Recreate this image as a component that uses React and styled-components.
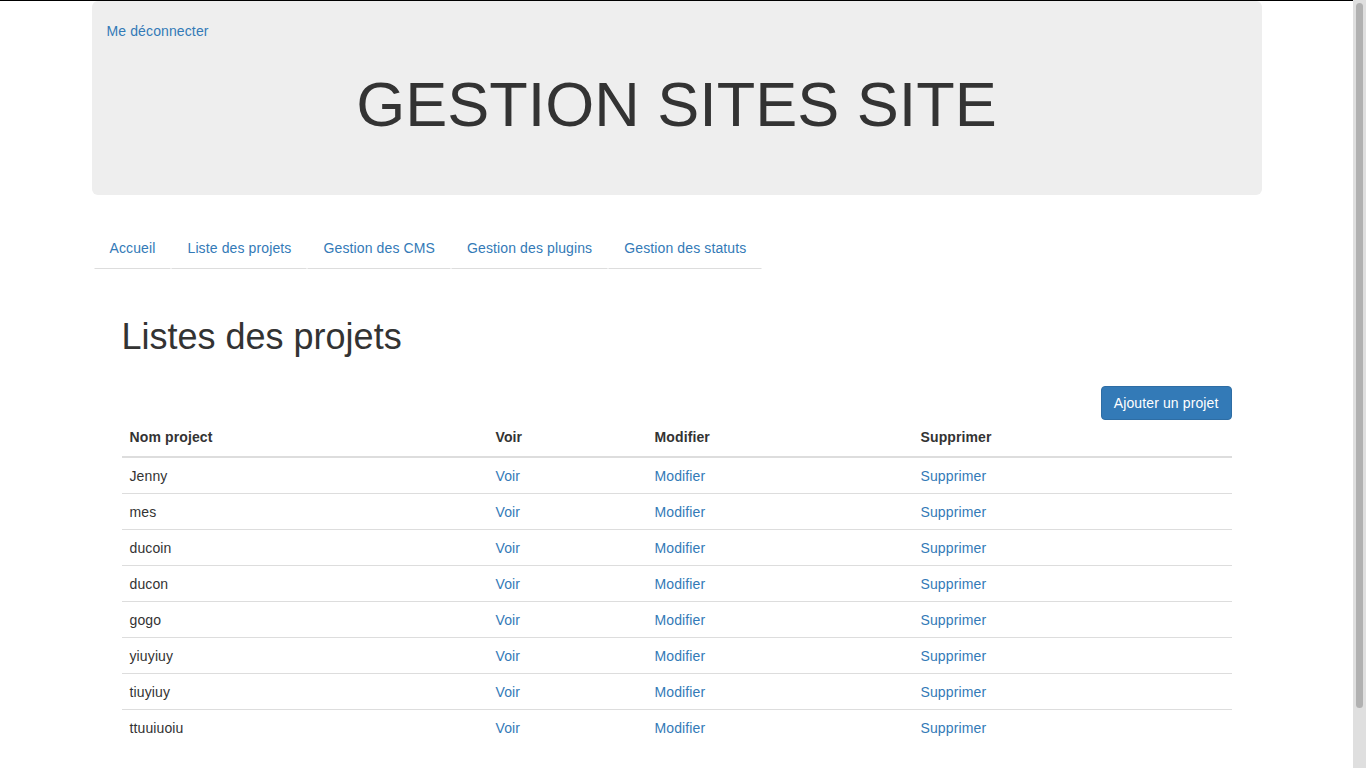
import React from "react";
import styled, { createGlobalStyle } from "styled-components";

const GlobalStyle = createGlobalStyle`
  body {
    margin: 0 13px 0 0;
    border-top: 1px solid #000;
    font-family: "Liberation Sans", Helvetica, Arial, sans-serif;
    font-size: 14px;
    line-height: 20px;
    letter-spacing: 0.12px;
    color: #333;
    background: #fff;
  }
  a {
    color: #337ab7;
    text-decoration: none;
  }
`;

// stands in for the browser's scrollbar, which the headless capture hides
const ScrollTrack = styled.div`
  position: fixed;
  top: 0;
  right: 0;
  width: 13px;
  height: 100vh;
  background: #dfdfdf;
`;

const ScrollThumb = styled.div`
  margin: 3px 3px 0;
  width: 7px;
  height: 705px;
  border-radius: 4px;
  background: #b1b1b1;
`;

const Container = styled.div`
  width: 1170px;
  margin: 0 auto;
  padding-bottom: 95px;
`;

const Jumbotron = styled.header`
  box-sizing: border-box;
  height: 194px;
  padding: 20px 15px 0;
  background: #eee;
  border-radius: 6px;
`;

const Title = styled.h1`
  margin: 29px 0 0;
  font-size: 63px;
  line-height: 1.1;
  font-weight: 500;
  letter-spacing: 0;
  text-align: center;
  color: #333;
`;

const Tabs = styled.ul`
  display: flex;
  list-style: none;
  margin: 32px 0 0 2px;
  padding: 0;
`;

const TabLink = styled.a`
  display: block;
  padding: 10px 15px;
  border: 1px solid transparent;
  border-bottom-color: #ddd;
  border-radius: 4px 4px 0 0;
`;

const Content = styled.main`
  padding: 0 30px;
`;

const Heading = styled.h1`
  margin: 48px 0 0;
  font-size: 36px;
  line-height: 1.1;
  font-weight: 500;
  letter-spacing: 0;
`;

const Toolbar = styled.div`
  display: flex;
  justify-content: flex-end;
  margin-top: 29px;
`;

const Button = styled.button`
  padding: 6px 12px;
  font-family: inherit;
  font-size: 14px;
  line-height: 20px;
  letter-spacing: inherit;
  color: #fff;
  background: #337ab7;
  border: 1px solid #2e6da4;
  border-radius: 4px;
  cursor: pointer;
`;

const Table = styled.table`
  width: 100%;
  table-layout: fixed;
  border-collapse: collapse;
  border-spacing: 0;
`;

const Th = styled.th`
  box-sizing: border-box;
  width: ${(p) => p.$w}px;
  padding: 7px 8px 9px;
  line-height: 20px;
  text-align: left;
  font-weight: bold;
  border-bottom: 2px solid #ddd;
`;

const Td = styled.td`
  padding: 9px 8px 7px;
  line-height: 19px;
  border-top: 1px solid #ddd;
`;

const tabs = [
  "Accueil",
  "Liste des projets",
  "Gestion des CMS",
  "Gestion des plugins",
  "Gestion des statuts",
];

const projects = [
  "Jenny",
  "mes",
  "ducoin",
  "ducon",
  "gogo",
  "yiuyiuy",
  "tiuyiuy",
  "ttuuiuoiu",
];

export default function App() {
  return (
    <>
      <GlobalStyle />
      <Container>
        <Jumbotron>
          <a href="#">Me déconnecter</a>
          <Title>GESTION SITES SITE</Title>
        </Jumbotron>

        <Tabs>
          {tabs.map((t) => (
            <li key={t}>
              <TabLink href="#">{t}</TabLink>
            </li>
          ))}
        </Tabs>

        <Content>
          <Heading>Listes des projets</Heading>
          <Toolbar>
            <Button>Ajouter un projet</Button>
          </Toolbar>
          <Table>
            <thead>
              <tr>
                <Th $w={366}>Nom project</Th>
                <Th $w={159}>Voir</Th>
                <Th $w={266}>Modifier</Th>
                <Th $w={319}>Supprimer</Th>
              </tr>
            </thead>
            <tbody>
              {projects.map((name, i) => (
                <tr key={i}>
                  <Td>{name}</Td>
                  <Td><a href="#">Voir</a></Td>
                  <Td><a href="#">Modifier</a></Td>
                  <Td><a href="#">Supprimer</a></Td>
                </tr>
              ))}
            </tbody>
          </Table>
        </Content>
      </Container>
      <ScrollTrack>
        <ScrollThumb />
      </ScrollTrack>
    </>
  );
}
